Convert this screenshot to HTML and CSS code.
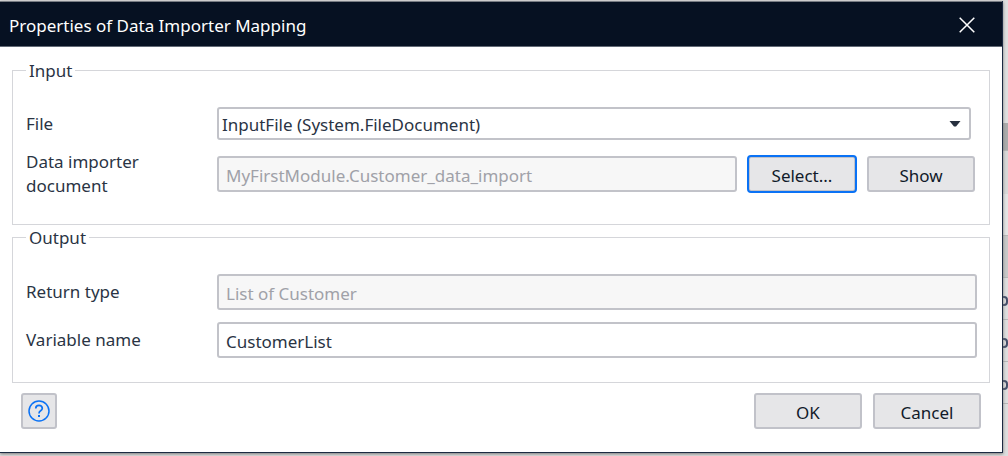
FILE: index.html
```html
<!DOCTYPE html>
<html lang="en">
<head>
<meta charset="utf-8">
<title>Properties of Data Importer Mapping</title>
<link rel="stylesheet" href="styles.css">
</head>
<body>
<div class="screen">
  <section class="dialog">
    <header class="titlebar">
      <h1 class="title">Properties of Data Importer Mapping</h1>
      <svg class="close" width="16" height="16" viewBox="0 0 16 16"><path d="M.7.7 15.3 15.3M15.3.7.7 15.3" fill="none" stroke="#fff" stroke-width="1.5"/></svg>
    </header>
    <main class="content">
      <div class="group input-group">
        <h2 class="legend"><span class="t-input">Input</span></h2>
        <div class="row file-row">
          <label class="label t-file">File</label>
          <div class="field combo"><span class="t-combo">InputFile (System.FileDocument)</span>
            <svg width="12" height="6" viewBox="0 0 12 6"><path d="M.5 0h11L7 5.5H5z" fill="#27303f"/></svg>
          </div>
        </div>
        <div class="row doc-row">
          <label class="label two-line t-doc">Data importer<br>document</label>
          <div class="field disabled"><span class="t-module">MyFirstModule.Customer_data_import</span></div>
          <button class="button focused"><span class="t-select">Select...</span></button>
          <button class="button"><span class="t-show">Show</span></button>
        </div>
      </div>
      <div class="group output-group">
        <h2 class="legend"><span class="t-output">Output</span></h2>
        <div class="row return-row">
          <label class="label t-return">Return type</label>
          <div class="field disabled"><span class="t-list">List of Customer</span></div>
        </div>
        <div class="row variable-row">
          <label class="label t-variable">Variable name</label>
          <div class="field"><span class="t-customer">CustomerList</span></div>
        </div>
      </div>
      <footer class="footer">
        <button class="button help" aria-label="Help">
          <svg width="22" height="22" viewBox="0 0 22 22" fill="none" stroke="#0a72f5"><circle cx="11" cy="11" r="10" stroke-width="1.5"/><path d="M7.8 8.6V8.2C7.8 6.4 9 5.4 11 5.4s3.3 1.1 3.3 2.8c0 1.3-.7 1.9-1.7 2.6-1.1.7-1.6 1.2-1.6 2.6" stroke-width="1.7"/><path d="M11 15v2" stroke-width="2"/></svg>
        </button>
        <button class="button ok"><span class="t-ok">OK</span></button>
        <button class="button"><span class="t-cancel">Cancel</span></button>
      </footer>
    </main>
  </section>
  <aside class="backdrop">
    <div class="strip top"></div>
    <div class="strip bar"></div>
    <div class="strip shade"></div>
    <div class="strip plain"></div>
    <div class="strip head"></div>
    <div class="strip item"><i></i></div>
    <div class="strip item"><i></i></div>
    <div class="strip item"><i></i></div>
  </aside>
</div>
</body>
</html>
```
FILE: styles.css
```css
* { box-sizing: border-box; }
body {
  margin: 0;
  font-family: "Noto Sans", "Open Sans", sans-serif;
  font-size: 17px;
  color: #2a3444;
}
.screen {
  display: flex;
  width: 1008px;
  height: 456px;
  padding-top: 1px;
  background: #dedede;
  overflow: hidden;
}
.dialog {
  width: 1003px;
  height: 452px;
  flex: none;
  display: flex;
  flex-direction: column;
  background: #fff;
  border-right: 1px solid #1c2a42;
  border-bottom: 1px solid #1c2a42;
  box-shadow: 0 1px 3px #777;
  position: relative;
}
.titlebar {
  height: 46px;
  flex: none;
  display: flex;
  align-items: center;
  justify-content: space-between;
  padding: 2px 27px 0 9px;
  background: #061122;
  border-top: 1px solid #777c83;
  border-bottom: 1px solid #626a76;
  color: #fff;
}
.title { margin: 0; font-size: 17px; font-weight: 400; }
.close { display: block; }
.content { padding: 23px 12px 0; }
.group { border: 1px solid #d5d6da; width: 978px; padding: 0 13px; }
.input-group { height: 155px; }
.output-group { height: 146px; margin-top: 12px; }
.legend {
  width: max-content;
  height: 24px;
  margin: -12px 0 0;
  padding: 0 3px;
  background: #fff;
  font-size: 17px;
  font-weight: 400;
  line-height: 24px;
}
.row { display: flex; align-items: center; height: 36px; }
.file-row { margin-top: 24px; height: 33px; }
.doc-row { margin-top: 16px; }
.return-row { margin-top: 24px; }
.variable-row { margin-top: 12px; }
.label { width: 191px; flex: none; line-height: 24px; }
.field {
  flex: none;
  display: flex;
  align-items: center;
  width: 760px;
  height: 36px;
  padding: 2px 7px 0;
  border: 2px solid #c2c3c9;
  border-radius: 3px;
  background: #fff;
  white-space: nowrap;
}
.combo { width: 754px; height: 33px; padding: 1px 8px 0 3px; justify-content: space-between; }
.doc-row .field { width: 520px; }
.disabled { background: #f7f7f7; color: #a0a1a8; }
.button {
  display: flex;
  align-items: center;
  justify-content: center;
  flex: none;
  width: 108px;
  height: 36px;
  margin: 0;
  padding: 2px 0 0;
  border: 2px solid #c1c2c9;
  border-radius: 3px;
  background: #e6e6e8;
  color: #111a2a;
  font: inherit;
}
.doc-row .button { margin-left: 11px; }
.focused { outline: 2px solid #0a72f5; outline-offset: -1px; }
.footer { display: flex; margin-top: 10px; padding: 0 9px; }
.help { width: 36px; padding: 0; }
.ok { margin: 0 11px 0 auto; }
.backdrop { width: 5px; flex: none; }
.strip { border-bottom: 1px solid #b8b8b8; }
.top { height: 122px; border: 0; background: #dfdfdf; }
.bar { height: 28px; background: #acacac; }
.shade { height: 43px; border: 0; background: #d8d8d8; }
.plain { height: 42px; background: #e4e4e4; }
.head { height: 42px; background: #c9c9c9; }
.item { height: 42px; padding-top: 18px; overflow: hidden; background: #dedede; }
.item i { display: block; width: 9px; height: 10px; margin-left: -4px; border: 2px solid #46506a; border-radius: 4px; }
```
